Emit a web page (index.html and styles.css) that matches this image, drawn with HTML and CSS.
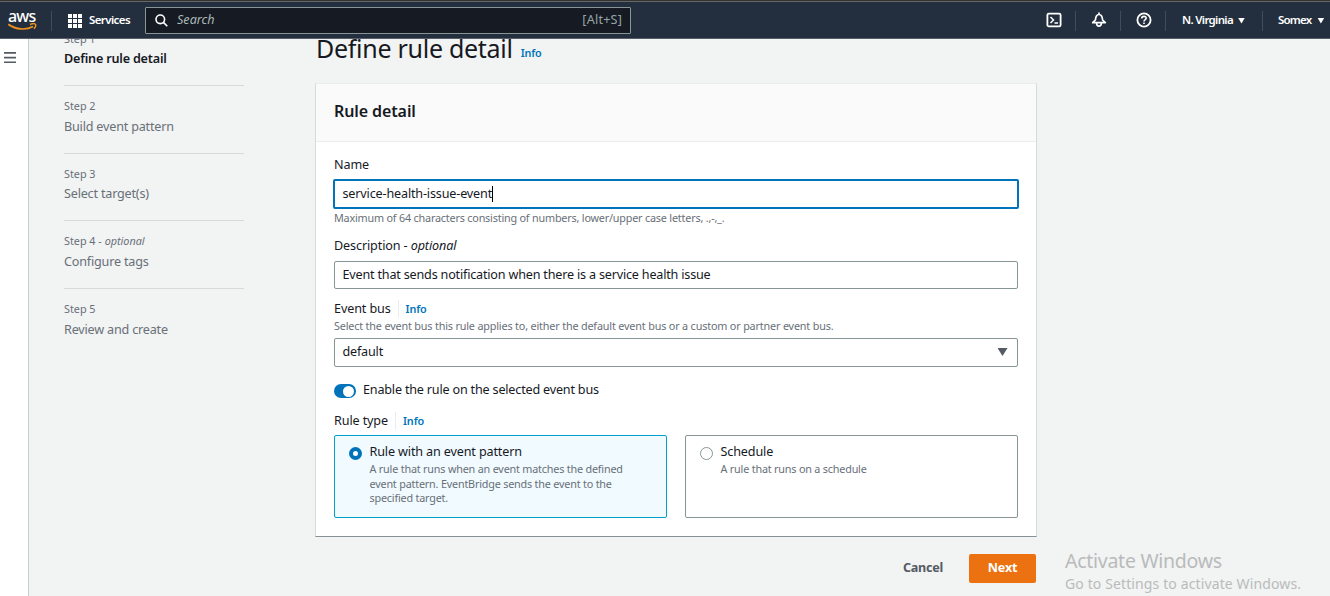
FILE: index.html
```
<!DOCTYPE html>
<html lang="en">
<head>
<meta charset="utf-8">
<title>Define rule detail</title>
<link rel="stylesheet" href="styles.css">
</head>
<body>
<header class="topbar">
  <div class="logo">
    <span class="logo-text">aws</span>
    <svg class="logo-smile" width="30" height="9" viewBox="0 0 30 9"><path d="M0.300 1.300C8 6.900 18 7.300 25 3.600" fill="none" stroke="#f0931e" stroke-width="1.700"/><path d="M22 1.500c2.200-.9 5-.9 5.600 0 .4 1-.4 3-1.800 4.300" fill="none" stroke="#f0931e" stroke-width="1.400"/></svg>
  </div>
  <span class="sep sep-logo"></span>
  <svg class="grid-icon" width="14" height="14" viewBox="0 0 14 14" fill="#fff"><path d="M0 0h4v4H0zM5 0h4v4H5zM10 0h4v4h-4zM0 5h4v4H0zM5 5h4v4H5zM10 5h4v4h-4zM0 10h4v4H0zM5 10h4v4H5zM10 10h4v4h-4z"/></svg>
  <span class="services">Services</span>
  <div class="search">
    <svg width="13" height="13" viewBox="0 0 13 13" fill="none" stroke="#fff" stroke-width="1.600"><circle cx="5.300" cy="5.300" r="4.300"/><path d="M8.400 8.400l3.900 3.900"/></svg>
    <span class="search-hint">Search</span>
    <span class="shortcut">[Alt+S]</span>
  </div>
  <nav class="tools">
    <span class="tool"><svg width="16" height="16" viewBox="0 0 16 16" fill="none" stroke="#fff" stroke-width="1.800"><rect x="1.400" y="1.600" width="13.200" height="12.800" rx="1.500"/><path d="M4.500 5l3 3-3 3M8.500 11h3.500" stroke-width="1.500"/></svg></span>
    <span class="tool"><svg width="16" height="16" viewBox="0 0 16 16" fill="none" stroke="#fff" stroke-width="1.700" stroke-linejoin="round"><path d="M8 .5v2M1.700 10.700L4.400 8C4.700 4.200 5.900 2.500 8 2.500s3.300 1.700 3.600 5.500l2.700 2.700zM5.600 11c0 4.200 4.800 4.200 4.800 0"/></svg></span>
    <span class="tool"><svg width="16" height="16" viewBox="0 0 16 16" fill="none" stroke="#fff" stroke-width="1.800"><circle cx="8" cy="8" r="6.600"/><path d="M5.700 6.500C5.800 3.700 10.300 3.800 10.200 6.300 10.100 7.700 8 7.500 8 9.500M8 10.600v1.500" stroke-width="1.600"/></svg></span>
    <span class="region"><span class="region-name">N. Virginia</span><i class="caret"></i></span>
    <span class="account"><span class="account-name">Somex</span><i class="caret"></i></span>
  </nav>
</header>

<div class="viewport">
  <aside class="rail">
    <svg width="12" height="12" viewBox="0 0 12 12" fill="#545b64"><path d="M0 0h12v1.700H0zM0 4.700h12v1.700H0zM0 9.400h12v1.700H0z"/></svg>
  </aside>
  <ol class="steps">
    <li class="step current"><div class="step-no">Step 1</div><div class="step-name">Define rule detail</div></li>
    <li class="step"><div class="step-no">Step 2</div><div class="step-name">Build event pattern</div></li>
    <li class="step"><div class="step-no">Step 3</div><div class="step-name">Select target(s)</div></li>
    <li class="step"><div class="step-no">Step 4 - <em>optional</em></div><div class="step-name">Configure tags</div></li>
    <li class="step"><div class="step-no">Step 5</div><div class="step-name">Review and create</div></li>
  </ol>
  <main class="content">
    <div class="title-row"><h1 class="title">Define rule detail</h1><a class="info">Info</a></div>
    <section class="panel">
      <div class="panel-head"><h2>Rule detail</h2></div>
      <div class="panel-body">
        <div class="label label-name">Name</div>
        <div class="input focused"><span>service-health-issue-event</span><i class="text-cursor"></i></div>
        <div class="hint hint-name">Maximum of 64 characters consisting of numbers, lower/upper case letters, .,-,_.</div>
        <div class="label label-desc">Description - <em>optional</em></div>
        <div class="input"><span>Event that sends notification when there is a service health issue</span></div>
        <div class="label label-bus"><span class="with-rule">Event bus</span><a class="info">Info</a></div>
        <div class="hint hint-bus">Select the event bus this rule applies to, either the default event bus or a custom or partner event bus.</div>
        <div class="input select"><span>default</span><i class="caret dark"></i></div>
        <div class="toggle-row"><span class="toggle"><i></i></span><span>Enable the rule on the selected event bus</span></div>
        <div class="label label-type"><span class="with-rule">Rule type</span><a class="info">Info</a></div>
        <div class="tiles">
          <div class="tile selected"><span class="radio"></span><div>
            <div class="tile-title">Rule with an event pattern</div>
            <div class="tile-text">A rule that runs when an event matches the defined<br>event pattern. EventBridge sends the event to the<br>specified target.</div>
          </div></div>
          <div class="tile"><span class="radio"></span><div>
            <div class="tile-title">Schedule</div>
            <div class="tile-text">A rule that runs on a schedule</div>
          </div></div>
        </div>
      </div>
    </section>
    <div class="actions"><span class="cancel">Cancel</span><span class="next">Next</span></div>
  </main>
  <div class="watermark"><div class="wm-title">Activate Windows</div><div class="wm-text">Go to Settings to activate Windows.</div></div>
</div>
</body>
</html>
```
FILE: styles.css
```
* { box-sizing: border-box; }
body {
  margin: 0;
  width: 1330px;
  height: 596px;
  overflow: hidden;
  background: #f2f3f3;
  color: #16191f;
  font: 12.6px/18px "Noto Sans", "Open Sans", sans-serif;
  letter-spacing: -.19px;
  white-space: nowrap;
}
h1, h2, ol { margin: 0; padding: 0; font-weight: 400; list-style: none; }
i { display: block; font-style: normal; }
svg { display: block; flex: none; }

.topbar {
  position: relative;
  z-index: 1;
  display: flex;
  align-items: center;
  height: 39px;
  padding-top: 2px;
  background: #232f3e;
  border-top: 1px solid #353232;
  border-bottom: 1px solid #575d69;
  box-shadow: inset 0 1px #666;
  color: #fff;
  font-size: 11.5px;
  font-weight: 500;
}
.logo { width: 30px; margin-left: 8px; height: 22px; }
.logo-text { display: block; height: 13px; font-size: 16px; line-height: 12px; letter-spacing: -.8px; font-weight: 500; }
.sep { width: 1px; height: 20px; background: #414d5c; }
.sep-logo { margin-left: 13px; }
.grid-icon { margin-left: 16px; }
.services { width: 56px; margin-left: 7px; letter-spacing: -.6px; line-height: 16px; padding-bottom: 2px; font-weight: 600; }
.search {
  display: flex;
  align-items: center;
  width: 486px;
  height: 27px;
  padding: 0 8px 1px 9px;
  background: #161a22;
  border: 1px solid #879596;
  border-radius: 1px;
  font-weight: 400;
  font-size: 12.6px;
}
.search-hint { margin-left: 9px; color: #aab7b8; font-style: italic; letter-spacing: 0; }
.shortcut { margin-left: auto; color: #95a5a6; letter-spacing: .2px; }
.tools { display: flex; align-items: center; margin-left: auto; }
.tool { display: flex; align-items: center; justify-content: center; width: 45px; height: 20px; padding-left: 1px; border-right: 1px solid #414d5c; }
.tool svg { margin-top: -1px; }
.region { display: flex; align-items: center; width: 97px; height: 20px; padding-left: 16px; border-right: 1px solid #414d5c; }
.account { display: flex; align-items: center; width: 67px; padding-left: 15px; }
.region-name, .account-name { padding-bottom: 2px; letter-spacing: -.68px; font-weight: 600; }
.account-name { letter-spacing: -.8px; }
.caret { width: 7px; height: 6px; margin-left: 5px; background: currentColor; clip-path: polygon(0 0, 100% 0, 50% 100%); }
.account .caret { margin-left: 6px; }

.viewport { display: flex; height: 557px; overflow: hidden; }
.rail { width: 29px; padding: 12.500px 0 0 4px; background: #fff; border-right: 1px solid #c8cccc; flex: none; }

.steps { width: 180px; margin: -20.600px 0 0 35px; flex: none; }
.step { height: 67.6px; padding-top: 11.200px; border-bottom: 1px solid #d5dbdb; color: #687078; }
.step:last-child { border: 0; }
.step-no { height: 18.600px; font-size: 10.8px; letter-spacing: 0; }
.step-name { line-height: 22px; }
.current .step-name { color: #16191f; font-weight: 600; }

.content { width: 720px; margin-left: 72px; flex: none; }
.title-row { display: flex; height: 44px; }
.title { font-size: 25px; line-height: 18px; letter-spacing: -.28px; }
.info { color: #0073bb; font-size: 10.8px; font-weight: 600; }
.title-row .info { margin: 5px 0 0 8px; }
.panel { margin: 0 -1px; background: #fff; border: 1px solid #d5dbdb; border-top-color: #eaeded; border-bottom-color: #879196; height: 454px; }
.panel-head { height: 58px; padding: 18px; background: #fafafa; border-bottom: 1px solid #eaeded; }
.panel-head h2 { font-size: 16px; line-height: 18px; font-weight: 600; letter-spacing: -.1px; }
.panel-body { padding: 14px 18px 0; }
.label { display: flex; height: 18px; white-space: pre; letter-spacing: -.12px; }
.input { display: flex; align-items: center; height: 28px; margin-top: 6px; padding: 0 7.500px 0; border: 1px solid #879596; border-radius: 2px; }
.focused { height: 30px; margin: 5px -1px 0; border: 2px solid #0073bb; letter-spacing: -.16px; }
.text-cursor { width: 1px; height: 16px; background: #000; }
.hint { color: #687078; font-size: 10.8px; line-height: 15px; height: 15px; }
.hint-bus { margin-top: 0; letter-spacing: -.165px; }
.hint-name { margin-top: 1px; }
.label-desc { margin-top: 12px; }
.label-bus { margin-top: 11px; }
.select { height: 29px; margin-top: 5px; padding-bottom: 2px; justify-content: space-between; }
.dark { width: 10px; height: 8px; color: #545b64; margin: 1px 2px 0 0; }
.with-rule { padding-right: 7px; margin-right: 7px; border-right: 1px solid #eaeded; }
.label .info { line-height: 18px; }
.toggle-row { display: flex; margin-top: 14px; height: 18px; }
.toggle { width: 22px; height: 14px; margin: 3px 7px 0 0; padding: 2px; border-radius: 7px; background: #0073bb; }
.toggle i { width: 11px; height: 11px; margin-left: 7px; border-radius: 50%; background: #fff; }
.label-type { margin-top: 13px; }
.tiles { display: grid; grid-template-columns: 333px 333px; column-gap: 18px; margin-top: 5px; }
.tile { display: flex; height: 83px; padding: 7px 14px; border: 1px solid #879596; border-radius: 2px; }
.selected { border-color: #00a1c9; background: #f1faff; }
.radio { width: 13px; height: 13px; margin: 4px 7.500px 0 0; border: 1px solid #879596; border-radius: 50%; background: #fff; }
.selected .radio { border: 4px solid #0073bb; }
.tile-title { letter-spacing: -.14px; }
.tile-text { color: #687078; font-size: 10.8px; line-height: 14.5px; margin-top: 1px; }
.actions { display: flex; justify-content: flex-end; align-items: center; height: 29px; margin-top: 17px; font-weight: 700; }
.cancel { color: #545b64; margin-right: 26px; padding-bottom: 2px; letter-spacing: -.25px; }
.next { width: 67px; height: 29px; line-height: 27px; text-align: center; background: #ec7211; color: #fff; border-radius: 2px; }

.watermark { margin: 510px 0 0 29px; color: #b9bbbb; flex: none; }
.wm-title { font-size: 19.5px; line-height: 24px; letter-spacing: -.27px; }
.wm-text { font-size: 14px; line-height: 22px; letter-spacing: .12px; }
```
